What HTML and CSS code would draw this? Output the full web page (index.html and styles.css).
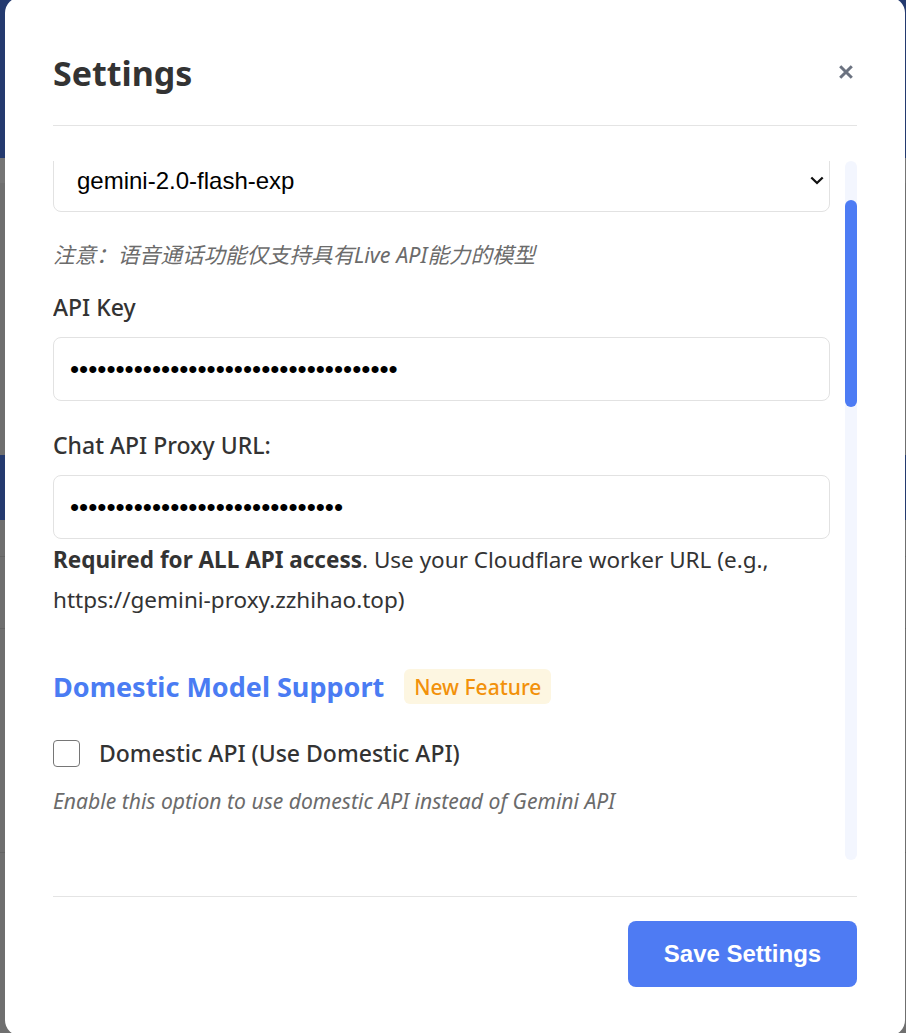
FILE: index.html
```html
<!DOCTYPE html>
<html lang="en">
<head>
<meta charset="utf-8">
<title>Settings</title>
<link rel="stylesheet" href="styles.css">
</head>
<body>
<div class="page">
  <div class="page-top"></div>
  <div class="page-strip"></div>
  <div class="page-mid"></div>
  <div class="page-band"></div>
  <div class="page-row page-row-a"></div>
  <div class="page-row page-row-b"></div>
  <div class="page-row page-row-c"></div>
  <div class="page-rest"></div>
</div>

<div class="overlay">
  <div class="modal" role="dialog" aria-labelledby="settings-title">
    <header class="modal-header">
      <h2 class="modal-title" id="settings-title">Settings</h2>
      <button class="close-btn" type="button" aria-label="Close">
        <svg width="14" height="14" viewBox="0 0 14 14" aria-hidden="true">
          <path d="M1.2 1.2 L12.8 12.8 M12.8 1.2 L1.2 12.8" stroke="#6b7280" stroke-width="3" fill="none"/>
        </svg>
      </button>
    </header>

    <div class="modal-body">
      <div class="scroll-area">
        <div class="scroll-content">
          <div class="form">
            <div class="select-wrap">
              <select class="model-select">
                <option>gemini-2.0-flash-exp</option>
              </select>
              <svg class="chevron" width="14" height="9" viewBox="0 0 14 9" aria-hidden="true">
                <path d="M1.3 1.5 L7 7 L12.7 1.5" stroke="#111" stroke-width="2.3" fill="none"/>
              </svg>
            </div>
            <p class="note">注意：语音通话功能仅支持具有Live API能力的模型</p>

            <label class="field-label label-key" for="api-key">API Key</label>
            <input class="text-input" id="api-key" type="password" value="AIzaSyD3x9kQmP7vLr2Tn8Wc4Yh6Bf1Jg5Ze">

            <label class="field-label label-proxy" for="proxy-url">Chat API Proxy URL:</label>
            <input class="text-input" id="proxy-url" type="password" value="https://gemini-proxy.zzhihao.t">

            <p class="helper"><strong>Required for ALL API access</strong><span>. Use your Cloudflare worker URL (e.g.,</span> <span>https://gemini-proxy.zzhihao.top)</span></p>

            <div class="section-head">
              <h3 class="section-title">Domestic Model Support</h3>
              <span class="badge">New Feature</span>
            </div>

            <label class="check-row">
              <span class="checkbox"></span>
              <span class="check-label">Domestic API (Use Domestic API)</span>
            </label>
            <p class="desc">Enable this option to use domestic API instead of Gemini API</p>
          </div>
        </div>
        <div class="scrollbar" aria-hidden="true"><div class="thumb"></div></div>
      </div>
    </div>

    <footer class="modal-footer">
      <button class="save-btn" type="button">Save Settings</button>
    </footer>
  </div>
</div>
</body>
</html>
```

FILE: styles.css
```css
* { box-sizing: border-box; }

html, body {
  margin: 0;
  height: 100%;
}

body {
  font-family: "Noto Sans", "Open Sans", "Noto Sans CJK SC", sans-serif;
  background: #6f6f6f;
  overflow: hidden;
}

/* dimmed page behind the dialog */
.page {
  display: flex;
  flex-direction: column;
  height: 1033px;
}
.page-top { height: 158px; background: #243a6f; }
.page-strip { height: 25px; background: #757575; }
.page-mid { height: 272px; background: #6f6f6f; }
.page-band { height: 65px; background: #243a6f; }
.page-row { border-bottom: 1px solid #646464; }
.page-row-a { height: 37px; }
.page-row-b { height: 72px; }
.page-row-c { height: 224px; }
.page-rest { flex: 1; }

.overlay {
  position: fixed;
  inset: 0;
  display: flex;
  align-items: center;
  justify-content: center;
  padding-left: 4px;
}

.modal {
  width: 900px;
  flex-shrink: 0;
  background: #fff;
  border-radius: 16px;
  display: flex;
  flex-direction: column;
  color: #333;
}

.modal-header {
  margin: 0 48px;
  padding: 55px 0 30px;
  border-bottom: 1px solid #e4e4e4;
  display: flex;
  justify-content: space-between;
  align-items: flex-start;
}

.modal-title {
  margin: 0;
  font-size: 34px;
  line-height: 43px;
  font-weight: 700;
  color: #333;
}

.close-btn {
  margin-top: 8px;
  margin-right: -1px;
  width: 24px;
  height: 24px;
  padding: 0;
  border: 0;
  background: none;
  display: flex;
  align-items: center;
  justify-content: center;
}

.modal-body {
  margin: 0 48px;
  padding: 35px 0 36px;
}

.scroll-area {
  height: 699px;
  display: flex;
  gap: 15px;
}

.scroll-content {
  flex: 1;
  overflow: hidden;
}

.form {
  margin-top: -13px;
  display: flex;
  flex-direction: column;
}

.scrollbar {
  width: 12px;
  background: #f3f6fe;
  border-radius: 6px;
}

.thumb {
  margin-top: 39px;
  height: 207px;
  background: #4d7cf4;
  border-radius: 6px;
}

/* fields */
.select-wrap {
  position: relative;
}

.model-select {
  width: 100%;
  height: 64px;
  padding: 0 23px;
  border: 1px solid #e2e2e2;
  border-radius: 8px;
  background: #fff;
  color: #000;
  font: 24px "Liberation Sans", Arial, sans-serif;
  appearance: none;
  -webkit-appearance: none;
}

.chevron {
  position: absolute;
  right: 6px;
  top: 28px;
  pointer-events: none;
}

.note {
  margin: 26px 0 0;
  font-size: 21.5px;
  line-height: 33px;
  font-style: italic;
  color: #6b6b6b;
}

.field-label {
  margin-top: 19px;
  font-size: 23px;
  line-height: 35px;
  font-weight: 500;
  color: #333;
}

.label-proxy { margin-top: 27px; }

.text-input {
  margin-top: 12px;
  width: 100%;
  height: 64px;
  padding: 0 16px;
  border: 1px solid #e2e2e2;
  border-radius: 8px;
  background: #fff;
  color: #000;
  font: 26px "Liberation Sans", Arial, sans-serif;
}

.helper {
  margin: 1px 0 0;
  font-size: 22.5px;
  line-height: 40px;
  color: #333;
}

.helper strong { font-weight: 700; }

.section-head {
  margin-top: 49px;
  display: flex;
  align-items: center;
  gap: 20px;
}

.section-title {
  margin: 0;
  font-size: 27px;
  line-height: 35px;
  font-weight: 700;
  color: #4a7cf3;
}

.badge {
  height: 35px;
  padding: 0 10px;
  display: flex;
  align-items: center;
  border-radius: 6px;
  background: #fdf6e1;
  color: #f2910a;
  font-size: 21px;
  font-weight: 500;
}

.check-row {
  margin-top: 32px;
  display: flex;
  align-items: center;
  gap: 19px;
}

.checkbox {
  width: 27px;
  height: 27px;
  border: 1.5px solid #767676;
  border-radius: 4px;
  background: #fff;
}

.check-label {
  font-size: 23px;
  line-height: 35px;
  font-weight: 500;
  color: #333;
}

.desc {
  margin: 13px 0 0;
  font-size: 21.1px;
  line-height: 33px;
  font-style: italic;
  color: #6b6b6b;
}

/* footer */
.modal-footer {
  margin: 0 48px;
  padding: 24px 0 49px;
  border-top: 1px solid #e4e4e4;
  display: flex;
  justify-content: flex-end;
}

.save-btn {
  width: 229px;
  height: 66px;
  border: 0;
  border-radius: 8px;
  background: #4e7bf3;
  color: #fff;
  font: 700 24px "Liberation Sans", Arial, sans-serif;
}
```
